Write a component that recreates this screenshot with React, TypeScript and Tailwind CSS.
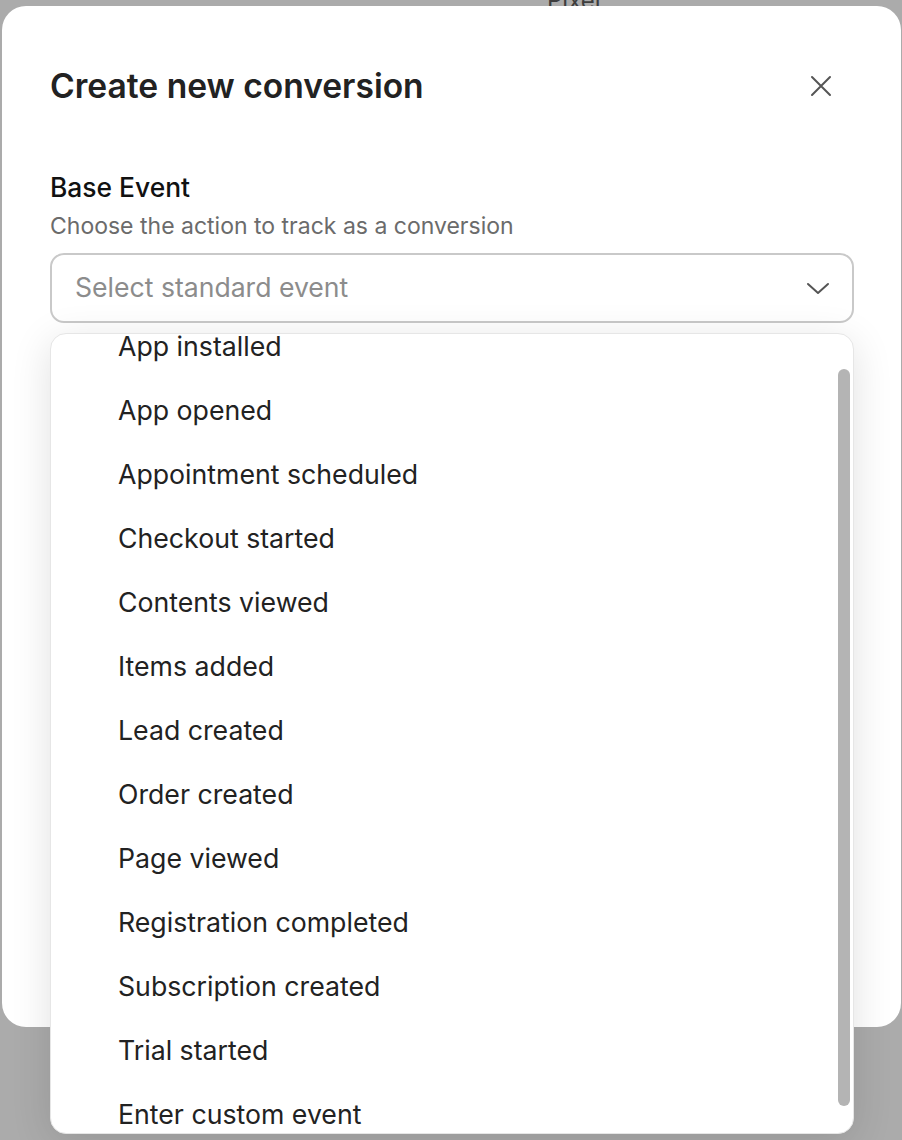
import React from "react";

const items = [
  "App installed",
  "App opened",
  "Appointment scheduled",
  "Checkout started",
  "Contents viewed",
  "Items added",
  "Lead created",
  "Order created",
  "Page viewed",
  "Registration completed",
  "Subscription created",
  "Trial started",
  "Enter custom event",
];

export default function App() {
  return (
    <div
      className="relative w-[902px] h-[1140px] overflow-hidden bg-[#ababab]"
      style={{ fontFamily: "Inter, 'Noto Sans', sans-serif" }}
    >
      <div className="absolute left-[547px] top-[-17px] text-[24px] text-[#3d3d3d]">Pixel</div>

      <div className="absolute left-[2px] top-[6px] w-[899px] h-[1021px] rounded-[24px] bg-white">
        <div className="flex flex-col px-[48px] pt-[60px]">
          <div className="flex items-center justify-between">
            <h2 className="text-[33.6px] leading-[40px] font-semibold text-[#222]">Create new conversion</h2>
            <button className="mr-[20px] text-[#555]">
              <svg width="24" height="24" viewBox="0 0 24 24" fill="none" stroke="currentColor" strokeWidth="2" strokeLinecap="round">
                <path d="M3 3l18 18M21 3L3 21" />
              </svg>
            </button>
          </div>
          <div className="mt-[66px] text-[26.4px] leading-[30px] font-medium text-[#111]">Base Event</div>
          <div className="mt-[10px] text-[23px] leading-[28px] text-[#6b6b6b]">Choose the action to track as a conversion</div>
          <div className="mt-[13px] h-[70px] w-[804px] rounded-[14px] border-2 border-[#c9c9c9] flex items-center justify-between pl-[23px] pr-[22px]">
            <span className="text-[26.6px] text-[#8c8c8c]">Select standard event</span>
            <svg width="24" height="24" viewBox="0 0 24 24" fill="none" stroke="#555" strokeWidth="2" strokeLinecap="round" strokeLinejoin="round">
              <path d="M2 8l10 9 10-9" />
            </svg>
          </div>
        </div>
      </div>

      <div className="absolute left-[50px] top-[333px] w-[804px] h-[801px] rounded-[16px] border border-[#e6e6e6] bg-white overflow-hidden shadow-[0_8px_40px_rgba(0,0,0,0.12)]">
        <div className="mt-[-20px] flex flex-col">
          {items.map((t) => (
            <div key={t} className="h-[64px] flex items-center pl-[67px] text-[26.7px] text-[#222]">
              {t}
            </div>
          ))}
        </div>
        <div className="absolute right-[3px] top-[35px] w-[12px] h-[737px] rounded-full bg-[#b4b4b4]" />
      </div>
    </div>
  );
}
